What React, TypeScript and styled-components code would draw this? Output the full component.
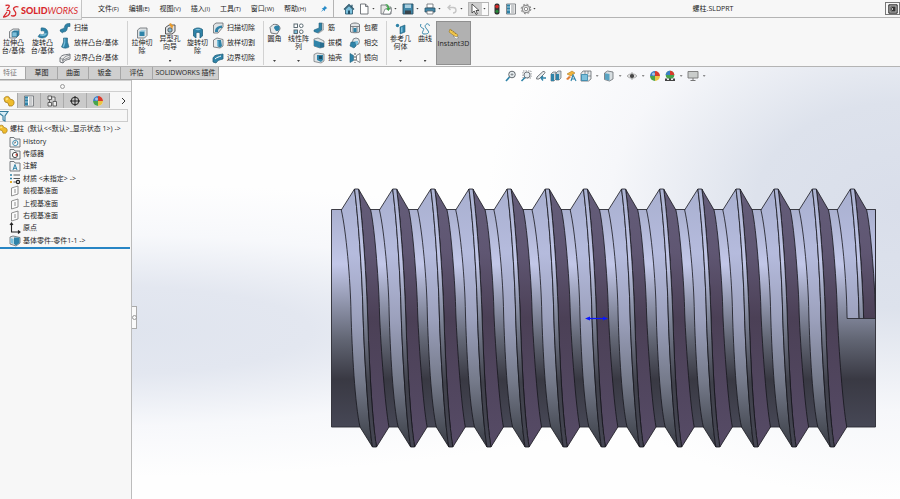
import React from "react";
import styled, { createGlobalStyle } from "styled-components";

const GlobalStyle = createGlobalStyle`
  * { box-sizing: border-box; }
  body {
    margin: 0;
    background: #fff;
    color: #1c1c1c;
    font: 7px/8px "Open Sans", "Noto Sans CJK SC", sans-serif;
  }
  button, input {
    font: inherit;
    color: inherit;
    padding: 0;
    margin: 0;
    border: 0;
    background: none;
  }
`;

/* ---------- icons ---------- */

const B = "#2f83a8";
const L = "#7cc0dc";
const G = "#666b70";

const glyphs: Record<string, React.ReactNode> = {
  home: <><path d="M1 6.5 6 1.5l5 5M9 1.8v2" fill="none" stroke="#24536a" strokeWidth="1.2" /><path d="M2.5 6.2 6 2.8l3.500 3.400V11h-7z" fill={L} stroke="#24536a" strokeWidth=".8" /><path d="M5 7.500h2V11H5z" fill="#24536a" /></>,
  page: <path d="M2.500 1h5l2.500 2.500V11H2.500zM7.500 1v2.500H10" fill="#fff" stroke={G} strokeWidth=".9" />,
  open: <><path d="M1 2h5l1 2h4v7H1z" fill="#e8e8e6" stroke={G} strokeWidth=".8" /><path d="M3 11 5 6h7l-2 5z" fill="#fff" stroke={G} strokeWidth=".7" /><path d="M5 1c3 0 4 1 4 4l1.500-.5L8.500 8 6 5.500l1.500-.2C7.500 3 7 2 5 1z" fill="#3aa545" /></>,
  save: <><path d="M1 1h10v10H1z" fill="#3f86a8" stroke="#2c5163" strokeWidth=".9" /><path d="M3 1.500h6V5H3z" fill="#a9cfe0" /><path d="M3 7.500h6V11H3z" fill="#3a444b" /></>,
  print: <><path d="M3 1h6v4H3z" fill="#fff" stroke={G} strokeWidth=".8" /><path d="M1 5h10v4H1z" fill="#3f86a8" stroke="#2c5163" strokeWidth=".8" /><path d="M3 8h6v3H3z" fill="#fff" stroke={G} strokeWidth=".8" /></>,
  undo: <path d="M4.500 2 2 4.500 4.500 7M2 4.500h5c4 0 4 5.500 0 5.500" fill="none" stroke="#c6c6c6" strokeWidth="1.4" />,
  cursor: <path d="M3 1v9l2.200-2L7 11.500l1.300-.6L7 7.500h3z" fill="#fff" stroke="#333" strokeWidth=".8" />,
  traffic: <><rect x="3.500" y=".5" width="5" height="11" rx="2" fill="#333" /><circle cx="6" cy="3.600" r="1.800" fill="#d62828" /><circle cx="6" cy="8.300" r="1.600" fill="#268a3a" /></>,
  list: <><path d="M1.500 1h9v10h-9z" fill="#fff" stroke={G} strokeWidth=".8" /><path d="M2 1.500h3v9H2z" fill={B} /><path d="M6 3h3.500M6 5h3.500M6 7h3.500M6 9h3.500" stroke={G} strokeWidth=".7" /><path d="M2 4h3M2 7h3" stroke="#fff" strokeWidth=".6" /></>,
  gear: <><circle cx="6" cy="6" r="3.800" fill="#e4e4e4" stroke="#777" strokeWidth=".9" /><circle cx="6" cy="6" r="4.800" fill="none" stroke="#777" strokeWidth=".9" strokeDasharray="1.900 1.870" /><circle cx="6" cy="6" r="1.700" fill="#fff" stroke="#777" strokeWidth=".8" /></>,
  pin: <path d="m7 1 4 4-1.500.3-2 2-.3 2.200-2-2L1 11l3.500-4.500-2-1.800 2.300-.3 2-2z" fill="#2a8cc8" />,
  panel: <><path d="M1 1h10v10H1z" fill="#b9b9b9" stroke="#222" strokeWidth="1.200" /><path d="M3 3h6v6H3z" fill="#333" /><path d="m4 4.500 2 1.500-2 1.500" fill="none" stroke="#fff" strokeWidth=".9" /></>,
  extrude: <><path d="M1.500 4.500 5 2h6v6l-3 3H1.500z" fill="#e4e7e8" stroke={G} strokeWidth=".8" /><path d="M4 5 6 3.500h5V8L9 9.800H4z" fill={B} /><path d="M4 5h5v4.800H4z" fill={L} stroke="#25617c" strokeWidth=".6" /></>,
  revolve: <><path d="M4 1c5-1 8 3 6.500 7C9 11.500 4 12 1 9.500L3 7c2 1.500 4 1 4.500-1S6.500 3.500 4 4z" fill={B} stroke="#25617c" strokeWidth=".5" /><path d="M3 7c2 1.500 4 1 4.500-1l2.500.5C9 9 6 9.500 3 8.500z" fill={L} /></>,
  sweep: <path d="M1 9c0-3 4-1 4.500-4S8 1.500 11 1.500v3C8 4 8.500 6 8 7.500 7 11 4 9 3.500 11z" fill={B} stroke="#25617c" strokeWidth=".6" />,
  loft: <><path d="M4.500 1h4v4L10 10c-2 1.500-5.500 1.500-7.500 0l2-5z" fill={B} stroke="#25617c" strokeWidth=".6" /><path d="M5.300 1.500h1V6L5 10l-1.400-.2L5.300 5z" fill={L} /></>,
  boundary: <><path d="M1 6c2-4 6-3 10-4v5c-4 1-5 1-7 4L1 10z" fill="#eee" stroke={G} strokeWidth=".9" /><path d="M1 6c1 1 2 1 3 1 2-3 4-3 7-4M4 7v4M3 8.500l7-3" fill="none" stroke={G} strokeWidth=".7" /></>,
  cut: <><path d="M1.500 3 4 1h7v7.500L8.500 11h-7z" fill="#dfe3e5" stroke={G} strokeWidth=".8" /><path d="M3.500 4.500h5v4.500h-5z" fill={B} /><path d="M3.500 4.500 5 3.500h5L8.500 4.500z" fill={L} /></>,
  hole: <><path d="M1.500 4.500 5 2h6v6.500L8 11H1.500z" fill="#e2e4e6" stroke="#444" strokeWidth=".9" /><circle cx="6" cy="7" r="2.200" fill="#8fbad0" stroke="#333" strokeWidth=".7" /><path d="m5 1 2-1 1 2 2 .5-1.500 1.500L9 6 7 4.500z" fill="#e99b2d" /></>,
  revcut: <><path d="M1.500 2.500C4 .500 8 .500 10.500 2.500V9L8 11V6c-1-1-3-1-4 0v5L1.500 9z" fill={B} stroke="#25617c" strokeWidth=".8" /><path d="M3 2.500c2-1 4-1 6 0-2 1-4 1-6 0z" fill={L} /></>,
  sweepcut: <><path d="M1.500 3 4 1h7v4L6 11H1.500z" fill="#dfe3e5" stroke={G} strokeWidth=".8" /><path d="M3 10c0-4 2-6 7-6.500V6C7 6 6 7 6 10z" fill={B} /></>,
  loftcut: <><path d="M1.500 3 5 1l6 1.500V9L8 11 1.500 10z" fill="#e7eaeb" stroke={G} strokeWidth=".8" /><path d="M5 3h4l1 6-2 1.500L5 9z" fill={B} /><path d="M5 3 6.500 4v5L5 9z" fill={L} /></>,
  boundcut: <><path d="M1 6c2-4 6-3 10-4v5c-4 1-5 1-7 4L1 10z" fill={B} stroke="#25617c" strokeWidth=".8" /><path d="M3 7c2-2 4-2 6-3" stroke="#fff" strokeWidth="1" fill="none" /></>,
  fillet: <><path d="M1 4.500 4 1.500C8 1 11 2 11 6L8 11 2 10z" fill="#e8eaeb" stroke={G} strokeWidth=".9" /><path d="M5 5c0-2 2-3 5-2 1 2 1 3-1 5L7 8z" fill={B} /></>,
  pattern: <g fill="#fff" stroke="#4d5d66" strokeWidth=".9"><rect x="1" y="1" width="3.500" height="3.500" /><rect x="6.500" y="1" width="3.500" height="3.500" rx="1.500" /><rect x="1" y="7" width="3.500" height="3.500" fill={L} /><rect x="6.500" y="7" width="3.500" height="3.500" rx="1.500" /></g>,
  rib: <><path d="M6 1h3v7L5 11 1 9.500V8l5-2z" fill={B} stroke="#25617c" strokeWidth=".6" /><path d="M9 1l1.500.5V8L6 11H5l4-3z" fill="#cfd5d8" stroke={G} strokeWidth=".4" /></>,
  draft: <><path d="M1 2 5 1l6 3v6l-4 1-6-2z" fill="#e1e5e7" stroke={G} strokeWidth=".7" /><path d="m1 3 6 2v6L1 9z" fill={B} /><path d="m7 5 4 1v4l-4 1z" fill="#2a6e90" /></>,
  shell: <><path d="M1 2.500 4 1l7 1v7l-3 2-7-1.500z" fill="#e1e5e7" stroke={G} strokeWidth=".7" /><path d="M4 3h6v5L8 10 4 8z" fill={B} /><path d="M6 4h3v3L6 7z" fill="#1f4d63" /></>,
  wrap: <><path d="M1.500 2.500c2-2 7-2 9 0V10c-2 1-7 1-9 0z" fill="#e3e6e8" stroke={G} strokeWidth=".9" /><path d="M1.500 4.500h9M4 5v5M8 5v5" stroke={G} strokeWidth=".8" /><path d="M4.500 6h3v4h-3z" fill={B} /></>,
  intersect: <><circle cx="7" cy="4.500" r="3.500" fill="#dfe6ea" stroke={G} strokeWidth=".8" /><path d="M2 5h5v4L5 11 1 9z" fill={B} stroke="#25617c" strokeWidth=".6" /><path d="M6 4h3v3L7 8z" fill={L} /></>,
  mirror: <><path d="m1 1.500 3.500 2v5l-3.500 2z" fill={B} stroke="#25617c" strokeWidth=".6" /><path d="m11 1.500-3.500 2v5l3.500 2z" fill="#fff" stroke={G} strokeWidth=".8" /><path d="M6 1v10" stroke="#444" strokeWidth=".9" strokeDasharray="2 1" /></>,
  refgeo: <><circle cx="2.500" cy="2.500" r="1.700" fill={B} /><path d="m5 4 5-2v7l-5 2z" fill={B} stroke="#25617c" strokeWidth=".6" /><path d="m6 4.500 1.500-.5v5L6 9.500z" fill={L} /></>,
  curve: <path d="M2 1C.500 4 3 5 4.500 5.500S1 11 5 11s6-1 3.500-4S5.500 3 7 1.500 10 1 10.500 3" fill="none" stroke={B} strokeWidth="1" />,
  instant: <><path d="M2 1 10 7l-1.500 2.500L1 4z" fill="#f4c84c" stroke="#8a6a1b" strokeWidth=".5" /><path d="m3 3 .6-1M5 4.500l.6-1M7 6l.6-1" stroke="#705410" strokeWidth=".6" /><path d="m5 8 6 1.500L8 11z" fill="#fff" stroke={G} strokeWidth=".4" /></>,
  zoomfit: <><circle cx="7" cy="4.500" r="3.300" fill="#e7edf0" stroke={G} strokeWidth="1" /><path d="m4.500 7-3.500 4" stroke={B} strokeWidth="1.600" /><path d="M5.500 4.500h3M7 3v3" stroke={G} strokeWidth=".6" /></>,
  zoomarea: <><path d="M3 1h8v7H3z" fill="none" stroke={G} strokeWidth=".7" strokeDasharray="1.500 1" /><circle cx="7" cy="5" r="3" fill="#e7edf0" stroke={G} strokeWidth=".9" /><path d="M5 7.500 1.500 11" stroke={B} strokeWidth="1.600" /></>,
  prev: <><path d="M2 7 8 1.500c2-.5 2.500 1 1.500 2L4 9H1.500z" fill="#e8ecee" stroke={G} strokeWidth=".9" /><path d="M11 8H6.500M8 6 6 8l2 2.500" fill="none" stroke={B} strokeWidth="1.300" /></>,
  section: <><path d="M1 4 3 2h3v7l-2 2H1zM6 3l2-2h3v7l-2 2H6z" fill="#cdd8dd" stroke={G} strokeWidth=".7" /><path d="M1 4h3v7H1zM6 4h3v6H6z" fill={B} /></>,
  annot: <><path d="M2 4 7 1l3 2-4 3z" fill="#f0b43c" stroke="#a06b14" strokeWidth=".5" /><path d="m1 9 3-3 2 1-3 3z" fill="#e07d35" /><path d="m6 11 2-6 3 6M7 9h3" fill="none" stroke={B} strokeWidth="1.100" /></>,
  orient: <><path d="M3 1h8v8L8.500 11H1V3.500z" fill="#e8ebed" stroke={G} strokeWidth=".8" /><path d="M1.500 4.500h6v6h-6z" fill={L} stroke={B} strokeWidth=".8" /><path d="M5 1v3M8 1v3M8 6h3" stroke={G} strokeWidth=".7" /></>,
  display: <><path d="M1.500 3 4.500 1 10 2v7l-3.500 2L1.500 9.500z" fill="#d8dee1" stroke={G} strokeWidth=".8" /><path d="m2 3.200 4.500.8v6.500l-4.500-1z" fill="#58a3c2" /></>,
  eye: <><path d="M1 6c2.500-3 7.500-3 10 0-2.500 3-7.500 3-10 0z" fill="#ddd" stroke="#999" strokeWidth=".7" /><circle cx="6" cy="6" r="2" fill="#333" /><path d="M6 2v8" stroke="#777" strokeWidth=".6" /></>,
  ball: <><circle cx="6" cy="6" r="5" fill="#fff" /><path d="M6 6V1a5 5 0 0 1 5 5z" fill="#d83a2c" /><path d="M6 6h5a5 5 0 0 1-5 5z" fill="#eac445" /><path d="M6 6v5a5 5 0 0 1-5-5z" fill="#48a34c" /><path d="M6 6H1a5 5 0 0 1 5-5z" fill="#3d7fc4" /><circle cx="4.500" cy="4" r="1.500" fill="#fff" opacity=".55" /></>,
  scene: <><circle cx="6" cy="5" r="4.300" fill="#48a34c" /><path d="M6 5V.7A4.300 4.300 0 0 1 10.300 5z" fill="#d83a2c" /><path d="M6 5H1.700A4.300 4.300 0 0 1 6 .7z" fill="#3d7fc4" /><path d="M1 8.500h10V11H1z" fill="#444" /><path d="M3 8.500h2V10H3zM7 8.500h2V10H7z" fill="#eee" /></>,
  monitor: <><path d="M1 1.500h10V8H1z" fill="#c9cccb" stroke="#777" strokeWidth=".9" /><path d="M6 8v2M3.500 10.500h5" stroke="#777" strokeWidth="1" /></>,
  part: <><path d="M1 4c0-2 3-3.500 5-2l1 2 3 1c2 2 1 5-1 6H6L5 8 2 7z" fill="#efbc2d" stroke="#9c7112" strokeWidth=".7" /><path d="M2.500 4c1-1.500 2.500-1 3 0L3.500 5.500z" fill="#fbe38c" /></>,
  config: <path d="M2 1h3.500v3.500H2zM2 7.500h3.500V11H2zM3.500 4.500v3M5.500 2H9v4M7 6.500h3.500V11H7z" fill="#eee" stroke="#555" strokeWidth=".9" />,
  target: <><circle cx="6" cy="6" r="3.800" fill="none" stroke="#222" strokeWidth="1" /><path d="M6 1v10M1 6h10" stroke="#222" strokeWidth="1" /></>,
  funnel: <path d="M-3 1.500h11L5 6v5l-2-1V6z" fill="#d7ecf5" stroke="#367d9d" strokeWidth="1.100" />,
  history: <><path d="M1 1.500h4l1 1.500h5v8H1z" fill="#f1f3f4" stroke={G} strokeWidth=".9" /><circle cx="6.300" cy="7" r="2.600" fill="#fff" stroke={B} strokeWidth=".9" /><path d="M6.300 5.500V7H5" stroke="#333" strokeWidth=".7" fill="none" /></>,
  sensor: <><path d="M1 1.500h4l1 1.500h5v8H1z" fill="#f1f3f4" stroke={G} strokeWidth=".9" /><circle cx="6" cy="7" r="2.600" fill="#fff" stroke="#333" strokeWidth=".9" /><path d="M6 7 8 5.500 8 8z" fill="#d4382b" /></>,
  notes: <><path d="M1 1.500h4l1 1.500h5v8H1z" fill="#f1f3f4" stroke={G} strokeWidth=".9" /><path d="m4 10 2-5.500L8 10M4.700 8.300h2.600" fill="none" stroke={B} strokeWidth="1" /></>,
  material: <><path d="M1 2h2M1 5.500h2" stroke={B} strokeWidth="1.600" /><path d="M1 9h2" stroke="#e2ab2d" strokeWidth="2" /><path d="M4.500 2H11M4.500 5.500H11M4.500 9H7" stroke="#444" strokeWidth=".9" /><circle cx="9" cy="9" r="1.600" fill="none" stroke="#222" strokeWidth="1.200" /></>,
  plane: <path d="M2.500 3 9 1v8l-6.500 2zM6 4v4" fill="#fbfbfb" stroke="#777" strokeWidth=".8" />,
  origin: <path d="M2.500 1v9h8M1 3l1.500-2L4 3M9 8.500l2 1.500-2 1.500" fill="none" stroke="#222" strokeWidth="1.100" />,
  base: <><path d="M1 2 4 1l7 1.500V8l-4 3-6-2z" fill="#dde4e7" stroke={G} strokeWidth=".8" /><path d="M5 2.500h5.500V8L7 10.500 5 9z" fill={B} /><path d="m1.500 3 3 1v5l-3-1z" fill={L} /></>,
};

const Svg = styled.svg<{ $s: number }>`
  display: block;
  flex: none;
  width: ${(p) => p.$s}px;
  height: ${(p) => p.$s}px;
`;
const Icon = ({ name, size = 12 }: { name: string; size?: number }) => (
  <Svg $s={size} viewBox="0 0 12 12" aria-hidden="true">{glyphs[name]}</Svg>
);

const Caret = styled.i`
  flex: none;
  width: 3px;
  height: 2px;
  background: #444;
  clip-path: polygon(0 0, 100% 0, 50% 100%);
`;

/* ---------- frame ---------- */

const Shell = styled.div`
  display: flex;
  flex-direction: column;
  height: 100vh;
  overflow: hidden;
`;
const TitleBar = styled.header`
  display: flex;
  align-items: center;
  height: 18px;
  flex: none;
  background: #f7f7f7;
  border-bottom: 1px solid #b4b4b4;
`;
const Brand = styled.div`
  display: flex;
  align-items: center;
  gap: 2px;
  align-self: flex-start;
  flex: none;
  z-index: 1;
  width: 82px;
  height: 20px;
  padding: 3px 0 0 3px;
  background: linear-gradient(#fdfdfd, #ededed);
  border: solid #c4c4c4;
  border-width: 0 1px 1px 0;
  color: #d8282c;
  font: 300 9px/12px Lato, sans-serif;
  white-space: nowrap;
  b { font-weight: 900; }
  span { font-style: italic; font-weight: 400; }
`;
const LogoMark = styled.svg`
  width: 16px;
  height: 15px;
  flex: none;
`;
const Menu = styled.nav`
  display: flex;
  gap: 10px;
  padding: 0 14px 0 16px;
  button { white-space: nowrap; }
  small { font-size: 6px; }
`;
const QuickBar = styled.div`
  display: flex;
  align-items: center;
  height: 17px;
  margin-left: 5px;
  padding-left: 9px;
  border-left: 1px solid #b4b4b4;
`;
const QuickButton = styled.button<{ $w: number; $on?: boolean }>`
  display: flex;
  align-items: center;
  justify-content: space-between;
  width: ${(p) => p.$w}px;
  height: 14px;
  padding-right: ${(p) => (p.$w > 16 ? 5 : 0)}px;
  ${(p) => p.$on && `
    padding: 0 2px 0 0;
    margin-right: 2px;
    border: 1px solid #b5b5b5;
    background: linear-gradient(90deg, #cfcfcf 13px, #fafafa 13px);
  `}
`;
const FileName = styled.h1`
  flex: 1;
  margin: 0;
  font: inherit;
  text-align: center;
`;
const PanelToggle = styled.button`
  display: grid;
  place-items: center;
  width: 15px;
  height: 13px;
  border: 1px solid #777;
`;

const Ribbon = styled.div`
  display: flex;
  flex: none;
  height: 49px;
  background: #f7f7f7;
  border-bottom: 1px solid #b4b4b4;
`;
const Group = styled.div`
  display: flex;
  margin: 3px 0 1px;
  border-right: 1px solid #d2d2d2;
  &:last-child { border-right: 0; }
`;
const Big = styled.button<{ $w: number; $high?: boolean; $on?: boolean }>`
  display: flex;
  flex-direction: column;
  align-items: center;
  width: ${(p) => p.$w}px;
  padding: ${(p) => (p.$high ? 2 : 6)}px 0 3px;
  line-height: 8px;
  ${(p) => p.$on && "background: #b1b1b1; border: 1px solid #8f8f8f;"}
  span { white-space: pre; }
  i { margin-top: auto; }
`;
const Column = styled.div<{ $w: number }>`
  display: flex;
  flex-direction: column;
  justify-content: space-between;
  width: ${(p) => p.$w}px;
  padding: 0 0 0 1px;
`;
const Small = styled.button`
  display: flex;
  align-items: center;
  gap: 3px;
  height: 14px;
  white-space: nowrap;
`;

/* ---------- workspace ---------- */

const Workspace = styled.main`
  display: flex;
  flex-direction: column;
  flex: 1;
  min-height: 0;
  background:
    radial-gradient(ellipse 46% 68% at 100% 32%, #d9deea 0%, #dde2ec 35%, rgba(238, 240, 246, 0.500) 70%, rgba(255, 255, 255, 0) 100%),
    radial-gradient(ellipse 75% 34% at 12% 61%, #dfe4ee 0%, #e3e7f0 30%, rgba(242, 244, 249, 0.600) 65%, rgba(255, 255, 255, 0) 100%),
    #fefefe;
`;
const TopRow = styled.div`
  display: flex;
  flex: none;
  height: 13px;
`;
const Tab = styled.button<{ $w: number; $on?: boolean }>`
  width: ${(p) => p.$w}px;
  white-space: nowrap;
  border: solid #a6a6a6;
  border-width: 0 1px 1px 0;
  background: ${(p) => (p.$on ? "#f7f7f7" : "#cfcfcf")};
  color: ${(p) => (p.$on ? "#777" : "#222")};
  ${(p) => p.$on && "text-align: left; padding-left: 3px;"}
`;
const Space = styled.div<{ $grow: number }>`
  flex: ${(p) => p.$grow} 0 0;
`;
const ViewBar = styled.div`
  display: flex;
  align-items: center;
  height: 12px;
  margin-top: 3px;
`;
const ViewButton = styled.button<{ $menu?: boolean }>`
  display: flex;
  align-items: center;
  gap: 4px;
  width: ${(p) => (p.$menu ? 23 : 15)}px;
  i { opacity: 0.600; }
`;
const Body = styled.div`
  display: flex;
  flex: 1;
  min-height: 0;
`;
const Side = styled.aside`
  width: 132px;
  flex: none;
  background: #f7f7f7;
  border-right: 1px solid #bcbcbc;
`;
const Grip = styled.div`
  display: grid;
  place-items: center;
  height: 12px;
  padding-right: 7px;
  border: solid #cfcfcf;
  border-width: 1px 0;
  &::after {
    content: "";
    width: 3px;
    height: 3px;
    border: 1px solid #999;
    border-radius: 50%;
  }
`;
const SideTabs = styled.div`
  display: flex;
  align-items: center;
  height: 17px;
  padding: 1px 5px 1px 0;
`;
const SideTab = styled.button<{ $on?: boolean }>`
  display: grid;
  place-items: center;
  width: ${(p) => (p.$on ? 18 : 23)}px;
  height: 15px;
  border-right: 1px solid #aaa;
  background: ${(p) => (p.$on ? "#f7f7f7" : "#cacaca")};
`;
const More = styled.button`
  display: grid;
  place-items: center;
  margin-left: auto;
  width: 5px;
`;
const Filter = styled.label`
  display: flex;
  align-items: center;
  height: 13px;
  margin-right: 3px;
  border: solid #ccc;
  border-width: 1px 1px 1px 0;
  input { flex: 1; min-width: 0; outline: 0; }
`;
const Tree = styled.ul`
  display: grid;
  grid-auto-rows: 1fr;
  height: 126px;
  margin: 1px 1px 0 0;
  padding: 0;
  list-style: none;
  border-bottom: 2px solid #2785c4;
`;
const Node = styled.li<{ $root?: boolean }>`
  display: flex;
  align-items: center;
  gap: 2px;
  padding-left: ${(p) => (p.$root ? 0 : 9)}px;
  margin-left: ${(p) => (p.$root ? -2 : 0)}px;
  white-space: pre;
`;
const Canvas = styled.section`
  position: relative;
  flex: 1;
  min-width: 0;
  > svg { display: block; width: 100%; height: 100%; }
`;
const SideHandle = styled.button`
  position: absolute;
  left: 0;
  top: 54%;
  display: grid;
  place-items: center;
  width: 5px;
  height: 23px;
  border: solid #aaa;
  border-width: 1px 1px 1px 0;
  background: #fafafa;
  &::after {
    content: "";
    width: 3px;
    height: 3px;
    border: 1px solid #999;
    border-radius: 50%;
  }
`;

/* ---------- threaded stud ---------- */

const PITCH = 38.15;
const rootL = "C347 230 351.500 280 352 313C353 350 356 405 361 427";
const crestLUp = "C369 420 365 350 364 313C363 270 359 215 355.500 189";
const crestR = "C363 215 367 270 368.500 313C370 360 373 420 377.500 447";
const rootRUp = "C386 405 382 350 380.500 313C380 285 376 230 371.700 210";

const Thread = ({ x }: { x: number }) => (
  <g transform={`translate(${x} 0)`} stroke="#15151c" strokeWidth=".8" strokeLinejoin="round">
    <path d={`M342.300 210${rootL}L373.500 447${crestLUp}Z`} fill="url(#flank)" />
    <path d={`M359.500 189${crestR}L390 427${rootRUp}Z`} fill="url(#shade)" />
    <path d={`M359.500 189${crestR}H373.500${crestLUp}Z`} fill="url(#crest)" />
  </g>
);

const Stud = () => (
  <svg viewBox="132 80 768 419" role="img" aria-label="螺柱">
    <defs>
      <linearGradient id="core" gradientUnits="userSpaceOnUse" x1="0" x2="0" y1="210" y2="427">
        <stop offset="0" stopColor="#aab0cf" />
        <stop offset=".25" stopColor="#c2c7e8" />
        <stop offset=".45" stopColor="#8a8fa5" />
        <stop offset=".6" stopColor="#616573" />
        <stop offset=".78" stopColor="#393943" />
        <stop offset="1" stopColor="#464755" />
      </linearGradient>
      <linearGradient id="flank" gradientUnits="userSpaceOnUse" x1="0" x2="0" y1="189" y2="447">
        <stop offset="0" stopColor="#a9b0d0" />
        <stop offset=".25" stopColor="#b5bbdd" />
        <stop offset=".5" stopColor="#9ca1bd" />
        <stop offset=".75" stopColor="#747989" />
        <stop offset=".93" stopColor="#4a4e58" />
        <stop offset="1" stopColor="#393b45" />
      </linearGradient>
      <linearGradient id="crest" gradientUnits="userSpaceOnUse" x1="0" x2="0" y1="189" y2="447">
        <stop offset="0" stopColor="#acb3d2" />
        <stop offset=".28" stopColor="#c2c7e8" />
        <stop offset=".5" stopColor="#7f8598" />
        <stop offset=".75" stopColor="#40414b" />
        <stop offset="1" stopColor="#454653" />
      </linearGradient>
      <linearGradient id="shade" gradientUnits="userSpaceOnUse" x1="0" x2="0" y1="189" y2="447">
        <stop offset="0" stopColor="#645d79" />
        <stop offset=".25" stopColor="#5f5672" />
        <stop offset=".5" stopColor="#4b4056" />
        <stop offset="1" stopColor="#564b66" />
      </linearGradient>
      <clipPath id="cutaway"><path d="M830 180h45.500v138.500H830z" /></clipPath>
    </defs>
    <path d="M331.500 209.500h544V427h-544z" fill="url(#core)" stroke="#2b2b33" strokeWidth=".9" />
    {Array.from({ length: 13 }, (_, i) => <Thread key={i} x={i * PITCH - 1} />)}
    <g clipPath="url(#cutaway)"><Thread x={13 * PITCH - 1} /></g>
    <path d="M847 318.500h28.500V209.500" fill="none" stroke="#2b2b33" strokeWidth=".9" />
    <path d="M587 318.500h17" stroke="#0b18ff" strokeWidth="1.200" />
    <path d="m585 318.500 5-2v4zM608 318.500l-5-2v4z" fill="#0b18ff" />
  </svg>
);

/* ---------- data ---------- */

const menus = [["文件", "F"], ["编辑", "E"], ["视图", "V"], ["插入", "I"], ["工具", "T"], ["窗口", "W"], ["帮助", "H"]];
const quick: [string, string, number, boolean?][] = [
  ["home", "主页", 15], ["page", "新建", 22], ["open", "打开", 22], ["save", "保存", 22], ["print", "打印", 22],
  ["undo", "撤销", 22], ["cursor", "选择", 21, true], ["traffic", "重建", 14], ["list", "属性", 15], ["gear", "选项", 21],
];
const tabs: [string, number][] = [["特征", 26], ["草图", 32], ["曲面", 31], ["钣金", 32], ["评估", 32], ["SOLIDWORKS 插件", 66]];
const views: [string, string, boolean?][] = [
  ["zoomfit", "整屏显示"], ["zoomarea", "局部放大"], ["prev", "上一视图"], ["section", "剖面视图"], ["annot", "动态注解"],
  ["orient", "视图定向", true], ["display", "显示样式", true], ["eye", "隐藏项目", true], ["ball", "编辑外观"],
  ["scene", "应用布景", true], ["monitor", "视图设定", true],
];
const nodes: [string, string][] = [
  ["history", "History"], ["sensor", "传感器"], ["notes", "注解"], ["material", "材质 <未指定> ->"], ["plane", "前视基准面"],
  ["plane", "上视基准面"], ["plane", "右视基准面"], ["origin", "原点"], ["base", "基体零件-零件1-1 ->"],
];

type BigProps = { icon: string; text: string; w: number; high?: boolean; menu?: boolean };
const BigTool = ({ icon, text, w, high, menu }: BigProps) => (
  <Big $w={w} $high={high}><Icon name={icon} /><span>{text}</span>{menu && <Caret />}</Big>
);
const Tools = ({ w, items }: { w: number; items: [string, string][] }) => (
  <Column $w={w}>
    {items.map(([icon, text]) => <Small key={icon}><Icon name={icon} />{text}</Small>)}
  </Column>
);

export default function App() {
  return (
    <Shell>
      <GlobalStyle />
      <TitleBar>
        <Brand>
          <LogoMark viewBox="0 0 16 15" fill="none" stroke="#d8282c" strokeWidth="1.300" aria-hidden="true">
            <path d="M2.500 1.500c4.500-1 5 .5 1.500 3.500" />
            <path d="M3.500 6.500C8 5.500 7.500 9 5 11.500c-1.500 1-3 1.500-4.500 1.500L4 8" />
            <path d="M15.500 3c-3-1-6 .5-4.500 3s3 3 1.500 5c-1 1-3 1.200-4.500.5" />
          </LogoMark>
          <div><b>SOLID</b><span>WORKS</span></div>
        </Brand>
        <Menu>
          {menus.map(([t, k]) => <button key={k}>{t}<small>({k})</small></button>)}
        </Menu>
        <Icon name="pin" size={8} />
        <QuickBar>
          {quick.map(([icon, label, w, on]) => (
            <QuickButton key={icon} $w={w} $on={on} aria-label={label}>
              <Icon name={icon} />{w > 16 && <Caret />}
            </QuickButton>
          ))}
        </QuickBar>
        <FileName>螺柱.SLDPRT</FileName>
        <PanelToggle aria-label="任务窗格"><Icon name="panel" size={10} /></PanelToggle>
      </TitleBar>

      <Ribbon>
        <Group>
          <BigTool icon="extrude" text={"拉伸凸\n台/基体"} w={27} />
          <BigTool icon="revolve" text={"旋转凸\n台/基体"} w={31} />
          <Tools w={69} items={[["sweep", "扫描"], ["loft", "放样凸台/基体"], ["boundary", "边界凸台/基体"]]} />
        </Group>
        <Group>
          <BigTool icon="cut" text={"拉伸切\n除"} w={28} />
          <BigTool icon="hole" text={"异型孔\n向导"} w={28} high menu />
          <BigTool icon="revcut" text={"旋转切\n除"} w={27} />
          <Tools w={52} items={[["sweepcut", "扫描切除"], ["loftcut", "放样切割"], ["boundcut", "边界切除"]]} />
        </Group>
        <Group>
          <BigTool icon="fillet" text="圆角" w={21} high menu />
          <BigTool icon="pattern" text={"线性阵\n列"} w={27} high menu />
          <Tools w={36} items={[["rib", "筋"], ["draft", "拔模"], ["shell", "抽壳"]]} />
          <Tools w={38} items={[["wrap", "包覆"], ["intersect", "相交"], ["mirror", "镜向"]]} />
        </Group>
        <Group>
          <BigTool icon="refgeo" text={"参考几\n何体"} w={27} high menu />
          <BigTool icon="curve" text="曲线" w={22} high menu />
          <Big $w={35} $on><Icon name="instant" /><span>Instant3D</span></Big>
        </Group>
      </Ribbon>

      <Workspace>
        <TopRow>
          {tabs.map(([t, w], i) => <Tab key={t} $w={w} $on={i === 0}>{t}</Tab>)}
          <Space $grow={3} />
          <ViewBar>
            {views.map(([icon, label, menu]) => (
              <ViewButton key={icon} $menu={menu} aria-label={label}><Icon name={icon} />{menu && <Caret />}</ViewButton>
            ))}
          </ViewBar>
          <Space $grow={2} />
        </TopRow>
        <Body>
          <Side>
            <Grip />
            <SideTabs>
              <SideTab $on aria-label="设计树"><Icon name="part" /></SideTab>
              <SideTab aria-label="属性"><Icon name="list" /></SideTab>
              <SideTab aria-label="配置"><Icon name="config" /></SideTab>
              <SideTab aria-label="尺寸"><Icon name="target" /></SideTab>
              <SideTab aria-label="外观"><Icon name="ball" /></SideTab>
              <More aria-label="更多">
                <svg width="5" height="8" viewBox="0 0 5 8"><path d="m1 1 3 3-3 3" fill="none" stroke="#333" /></svg>
              </More>
            </SideTabs>
            <Filter><Icon name="funnel" /><input aria-label="过滤" /></Filter>
            <Tree>
              <Node $root><Icon name="part" size={10} />{"螺柱  (默认<<默认>_显示状态 1>) ->"}</Node>
              {nodes.map(([icon, text]) => <Node key={text}><Icon name={icon} />{text}</Node>)}
            </Tree>
          </Side>
          <Canvas>
            <Stud />
            <SideHandle aria-label="折叠面板" />
          </Canvas>
        </Body>
      </Workspace>
    </Shell>
  );
}
